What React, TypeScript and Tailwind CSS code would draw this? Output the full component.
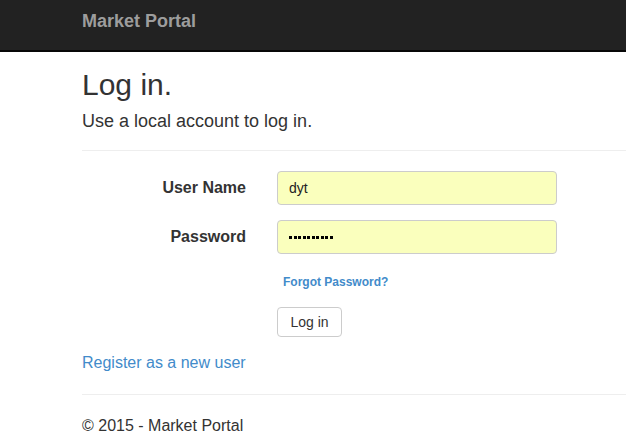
export default function App() {
  return (
    <div className="min-h-screen bg-white overflow-hidden font-['Liberation_Sans',Arial,sans-serif] text-[#333]">
      {/* Navbar */}
      <div className="h-[52px] bg-[#222] border-b-2 border-[#080808] pl-[82px] pt-[10px]">
        <span className="text-[18px] leading-[20px] font-bold text-[#9d9d9d]">Market Portal</span>
      </div>

      {/* Body */}
      <div className="pl-[82px]">
        <h2 className="mt-[16px] text-[30px] leading-[33px] font-normal">Log in.</h2>
        <h4 className="mt-[10px] text-[18px] leading-[20px] font-normal">Use a local account to log in.</h4>
        <hr className="mt-[19px] border-0 border-t border-[#eee]" />

        <form className="flex flex-col">
          <div className="mt-[20px] flex items-center">
            <label className="w-[164px] text-right text-[16px] font-bold">User Name</label>
            <div className="ml-[31px] w-[280px] h-[34px] rounded-[4px] border border-[#ccc] bg-[#faffbd] px-[11px] flex items-center text-[14px] text-[#222]">
              dyt
            </div>
          </div>
          <div className="mt-[15px] flex items-center">
            <label className="w-[164px] text-right text-[16px] font-bold">Password</label>
            <div className="ml-[31px] w-[280px] h-[34px] rounded-[4px] border border-[#ccc] bg-[#faffbd] px-[11px] flex items-center gap-[1.5px]">
              {Array.from({ length: 10 }).map((_, i) => (
                <span key={i} className="w-[3px] h-[3px] bg-black" />
              ))}
            </div>
          </div>
          <div className="mt-[17px] ml-[201px] h-[20px] leading-[20px]">
            <a className="text-[12px] font-bold text-[#428bca]">Forgot Password?</a>
          </div>
          <div className="mt-[16px] ml-[195px]">
            <button
              type="button"
              className="w-[65px] h-[30px] rounded-[4px] border border-[#ccc] bg-white text-[14px] text-[#333]"
            >
              Log in
            </button>
          </div>
        </form>

        <p className="mt-[16px] text-[16px] leading-[20px]">
          <a className="text-[#428bca]">Register as a new user</a>
        </p>

        <hr className="mt-[21px] border-0 border-t border-[#eee]" />
        <footer className="mt-[21px] text-[16px] leading-[20px]">© 2015 - Market Portal</footer>
      </div>
    </div>
  );
}
